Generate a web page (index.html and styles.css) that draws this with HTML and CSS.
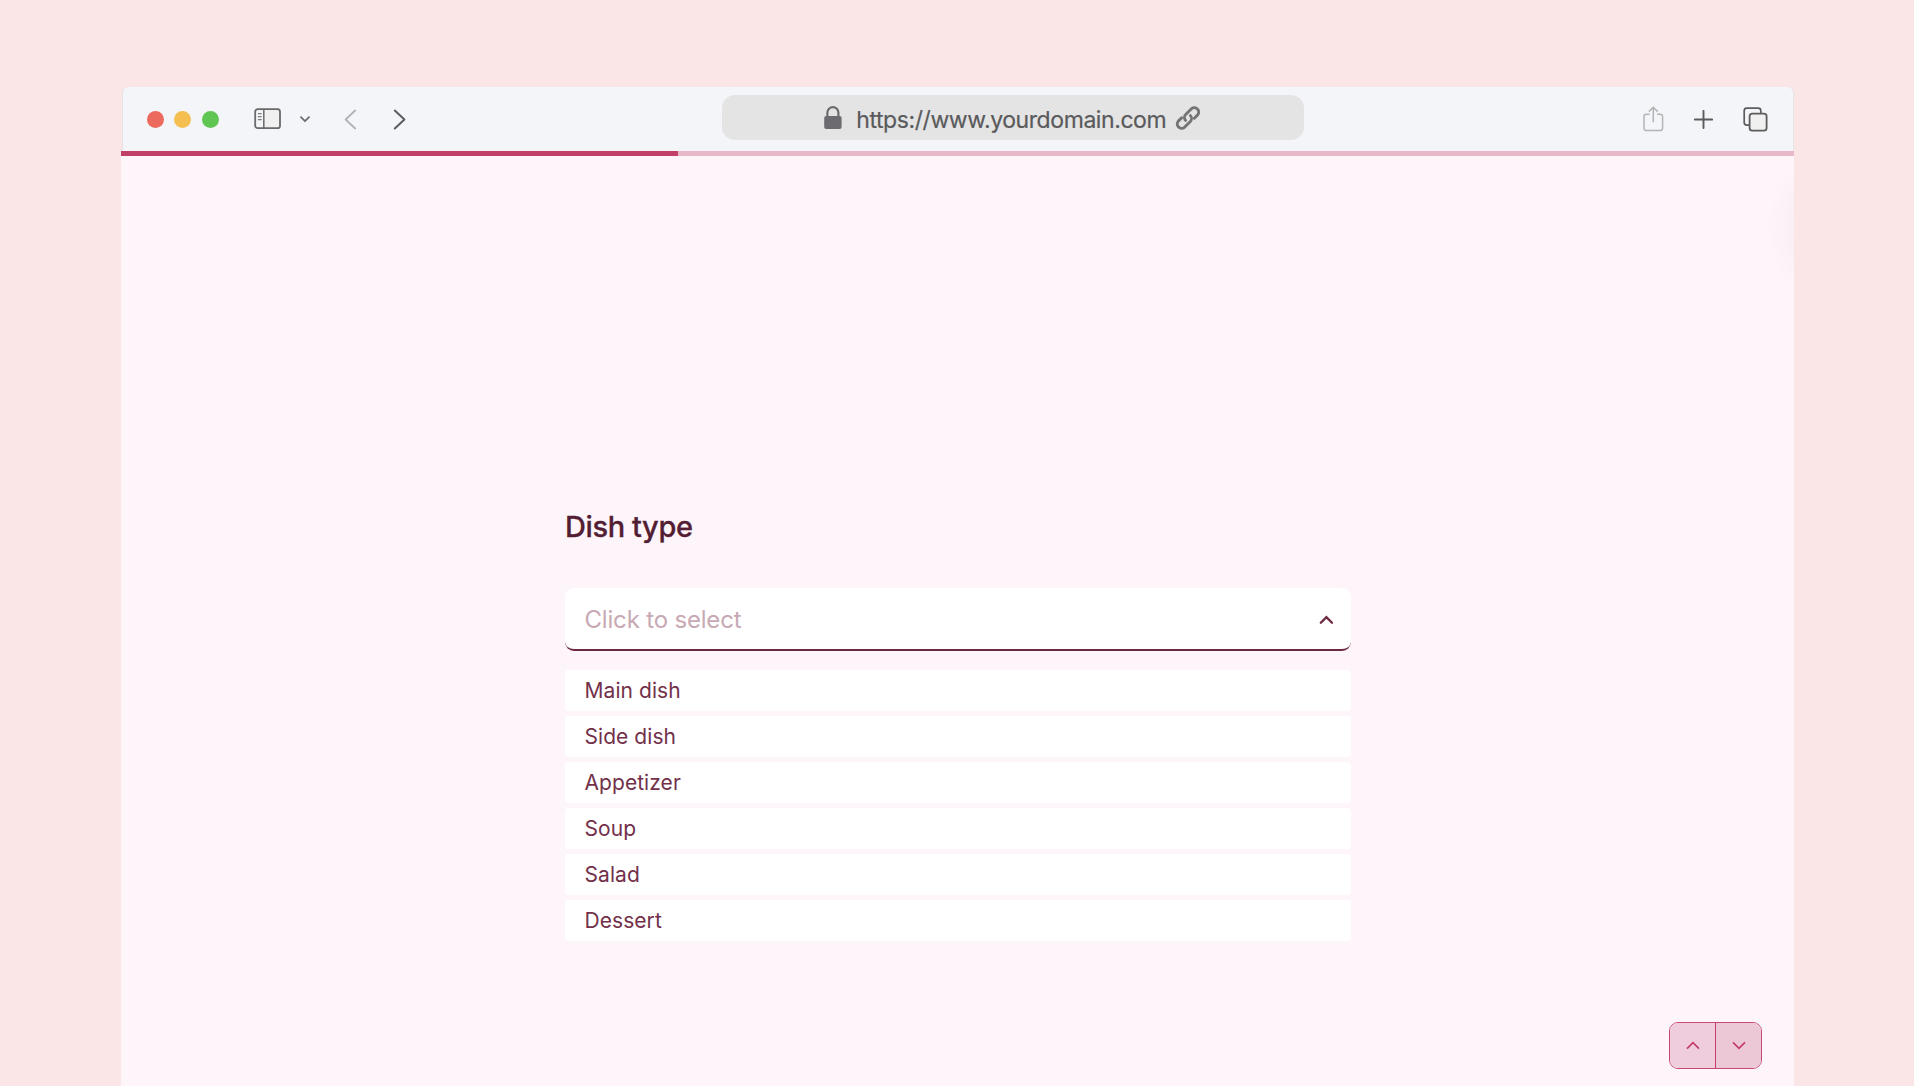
FILE: index.html
```html
<!DOCTYPE html>
<html lang="en">
<head>
  <meta charset="UTF-8" />
  <meta name="viewport" content="width=device-width, initial-scale=1.0"/>
  <title>Dish type</title>
  <link rel="stylesheet" href="styles.css">
</head>
<body>
  <div class="window">
    <header class="toolbar">
      <div class="lights">
        <span class="light red"></span>
        <span class="light yellow"></span>
        <span class="light green"></span>
      </div>
      <svg class="icon sidebar-icon" width="28" height="22" viewBox="0 0 28 22">
        <rect x="1.2" y="1.2" width="24.8" height="19" rx="2.5" fill="#f0f0f1"/>
        <path d="M1.5 3h8v16h-8z" fill="#f4f5f8"/>
        <rect x="1.2" y="1.2" width="24.8" height="19" rx="2.5" fill="none" stroke="#6a6a6c" stroke-width="1.8"/>
        <path d="M9.8 1.5v18.5" stroke="#6a6a6c" stroke-width="1.5"/>
        <path d="M3.9 5.6h3.7M3.9 8.6h3.7M3.9 11.6h3.7" stroke="#7c7c7e" stroke-width="1.3"/>
      </svg>
      <svg class="icon menu-icon" width="10" height="7" viewBox="0 0 10 7">
        <path d="M1 1.2l4 4 4-4" fill="none" stroke="#6f6f71" stroke-width="1.8" stroke-linecap="round" stroke-linejoin="round"/>
      </svg>
      <svg class="icon back-icon" width="13" height="21" viewBox="0 0 13 21">
        <path d="M11.2 1.5L1.6 10.5l9.6 9" fill="none" stroke="#b2b2b4" stroke-width="1.8" stroke-linecap="round" stroke-linejoin="round"/>
      </svg>
      <svg class="icon forward-icon" width="13" height="21" viewBox="0 0 13 21">
        <path d="M1.8 1.5l9.6 9-9.6 9" fill="none" stroke="#5c5c5e" stroke-width="2" stroke-linecap="round" stroke-linejoin="round"/>
      </svg>
      <div class="address">
        <svg width="18" height="23" viewBox="0 0 18 23">
          <rect x="0.2" y="10" width="17.4" height="13" rx="2" fill="#6c6c70"/>
          <path d="M3.4 11V6.6a5.5 5.5 0 0 1 11 0V11" fill="none" stroke="#6c6c70" stroke-width="2.2"/>
        </svg>
        <span class="url">https://www.yourdomain.com</span>
        <svg class="link-icon" width="26" height="26" viewBox="0 0 26 26">
          <g fill="none" stroke="#747476" stroke-width="2.9" stroke-linecap="round" stroke-linejoin="round">
            <path d="M10.6 15.4a4.4 4.4 0 0 1 .3-6.2l5.6-5.5a4.4 4.4 0 0 1 6.2 6.2l-3.4 3.4"/>
            <path d="M15.4 10.6a4.4 4.4 0 0 1-.3 6.2l-5.6 5.5a4.4 4.4 0 0 1-6.2-6.2l3.4-3.4"/>
          </g>
        </svg>
      </div>
      <svg class="icon share-icon" width="21" height="26" viewBox="0 0 21 26">
        <path d="M6.6 8.2H3.4A2.4 2.4 0 0 0 1 10.6v11.6a2.4 2.4 0 0 0 2.4 2.4h13.8a2.4 2.4 0 0 0 2.4-2.4V10.6a2.4 2.4 0 0 0-2.4-2.4H14" fill="none" stroke="#b4b4b6" stroke-width="1.5"/>
        <path d="M10.3 16.3V1.6M5.9 5.6l4.4-4.3 4.4 4.3" fill="none" stroke="#b4b4b6" stroke-width="1.5"/>
      </svg>
      <svg class="icon plus-icon" width="19" height="19" viewBox="0 0 19 19">
        <path d="M9.5 0.9v17.2M0.9 9.5h17.2" stroke="#5c5c5e" stroke-width="1.9" stroke-linecap="round"/>
      </svg>
      <svg class="icon tabs-icon" width="25" height="25" viewBox="0 0 25 25">
        <rect x="1.2" y="1.2" width="16.6" height="17" rx="2.6" fill="#f4f5f8" stroke="#5c5c5e" stroke-width="1.7"/>
        <rect x="6.6" y="6.6" width="17" height="17" rx="2.6" fill="#f0f0f1" stroke="#5c5c5e" stroke-width="1.8"/>
      </svg>
    </header>
    <div class="progress"><div class="progress-bar"></div></div>

    <main class="page">
      <form class="question">
        <h1>Dish type</h1>
        <div class="select">
          <span>Click to select</span>
          <svg width="15" height="10" viewBox="0 0 15 10">
            <path d="M1.8 7.8l5.6-5.6 5.6 5.6" fill="none" stroke="#6d2942" stroke-width="2.3" stroke-linecap="round"/>
          </svg>
        </div>
        <ul class="options">
          <li>Main dish</li>
          <li>Side dish</li>
          <li>Appetizer</li>
          <li>Soup</li>
          <li>Salad</li>
          <li>Dessert</li>
        </ul>
      </form>
      <div class="edge-shadow"></div>
      <div class="pager">
        <button type="button">
          <svg width="14" height="9" viewBox="0 0 14 9"><path d="M1 7.6l6-6 6 6" fill="none" stroke="#c33b67" stroke-width="1.6"/></svg>
        </button>
        <button type="button">
          <svg width="14" height="9" viewBox="0 0 14 9"><path d="M1 1.4l6 6 6-6" fill="none" stroke="#c33b67" stroke-width="1.6"/></svg>
        </button>
      </div>
    </main>
  </div>
</body>
</html>
```
FILE: styles.css
```css
* {
  box-sizing: border-box;
}
body {
  margin: 0;
  height: 1086px;
  padding: 87px 120px 0 121px;
  background-color: #fae6e6;
  font-family: Inter, "Liberation Sans", sans-serif;
  overflow: hidden;
}
.window {
  height: 999px;
  display: flex;
  flex-direction: column;
}
.toolbar {
  height: 64px;
  display: flex;
  align-items: center;
  flex-shrink: 0;
  margin-left: 1px;
  padding: 0 25px 0 24px;
  background-color: #f4f5f8;
  border-left: 1px solid #e4e4e6;
  border-right: 1px solid #e4e4e6;
  border-radius: 6px 6px 0 0;
}
.icon {
  flex-shrink: 0;
}
.lights {
  display: flex;
  gap: 10.4px;
  margin-top: 1px;
}
.light {
  width: 17px;
  height: 17px;
  border-radius: 50%;
}
.red {
  background-color: #ec695e;
}
.yellow {
  background-color: #f4be50;
}
.green {
  background-color: #61c554;
}
.sidebar-icon {
  margin-left: 35px;
}
.menu-icon {
  margin-left: 18px;
}
.back-icon {
  margin-left: 34px;
}
.forward-icon {
  margin-left: 36px;
}
.address {
  width: 582px;
  height: 45px;
  margin: -3px 0 0 316px;
  padding-left: 102px;
  display: flex;
  align-items: center;
  background-color: #e4e4e4;
  border-radius: 13px;
}
.address svg {
  flex-shrink: 0;
}
.url {
  width: 310px;
  margin: 4px 9px 0 14.5px;
  color: #5a5a5c;
  font-size: 23px;
  letter-spacing: -0.42px;
  -webkit-text-stroke: 0.2px #5a5a5c;
  white-space: nowrap;
}
.share-icon {
  margin-left: auto;
}
.plus-icon {
  margin-left: 30px;
}
.tabs-icon {
  margin-left: 30px;
}
.progress {
  height: 5px;
  flex-shrink: 0;
  background-color: #e7b8c8;
}
.progress-bar {
  width: 556.5px;
  height: 5px;
  background-color: #c04067;
}
.page {
  flex: 1;
  position: relative;
  background-color: #fef5fa;
  overflow: hidden;
}
.question {
  width: 785.5px;
  margin: 350px 0 0 444px;
}
h1 {
  margin: 0;
  color: #531d33;
  font-size: 29px;
  line-height: 41px;
  font-weight: 500;
  letter-spacing: -0.4px;
  -webkit-text-stroke: 0.3px #531d33;
}
.select {
  height: 63px;
  margin-top: 41px;
  padding: 2px 17px 0 19.5px;
  display: flex;
  justify-content: space-between;
  align-items: center;
  background-color: #fff;
  border-bottom: 2px solid #6d2942;
  border-radius: 9px;
  color: #c7a9b4;
  font-size: 24px;
  letter-spacing: -0.18px;
}
.options {
  margin: 19px 0 0;
  padding: 0;
  list-style: none;
  display: grid;
  gap: 5px;
}
.options li {
  height: 41px;
  padding-left: 19.5px;
  background-color: #fff;
  border-radius: 4px;
  color: #72304a;
  font-size: 21px;
  line-height: 41px;
  letter-spacing: 0.06px;
}
/* soft shade coming in from the right edge */
.edge-shadow {
  position: absolute;
  top: 25px;
  right: -64px;
  width: 60px;
  height: 90px;
  border-radius: 30px;
  box-shadow: 0 0 34px rgba(80, 60, 90, 0.09);
}
.pager {
  position: absolute;
  top: 866px;
  right: 32px;
  width: 93px;
  height: 47px;
  display: flex;
  border: 1px solid #c94872;
  border-radius: 9px;
  overflow: hidden;
}
.pager button {
  flex: 1;
  padding: 0;
  display: flex;
  justify-content: center;
  align-items: center;
  background-color: #efcddc;
  border: none;
}
.pager button + button {
  background-color: #ecc8d7;
  border-left: 1px solid #c33b67;
}
```
